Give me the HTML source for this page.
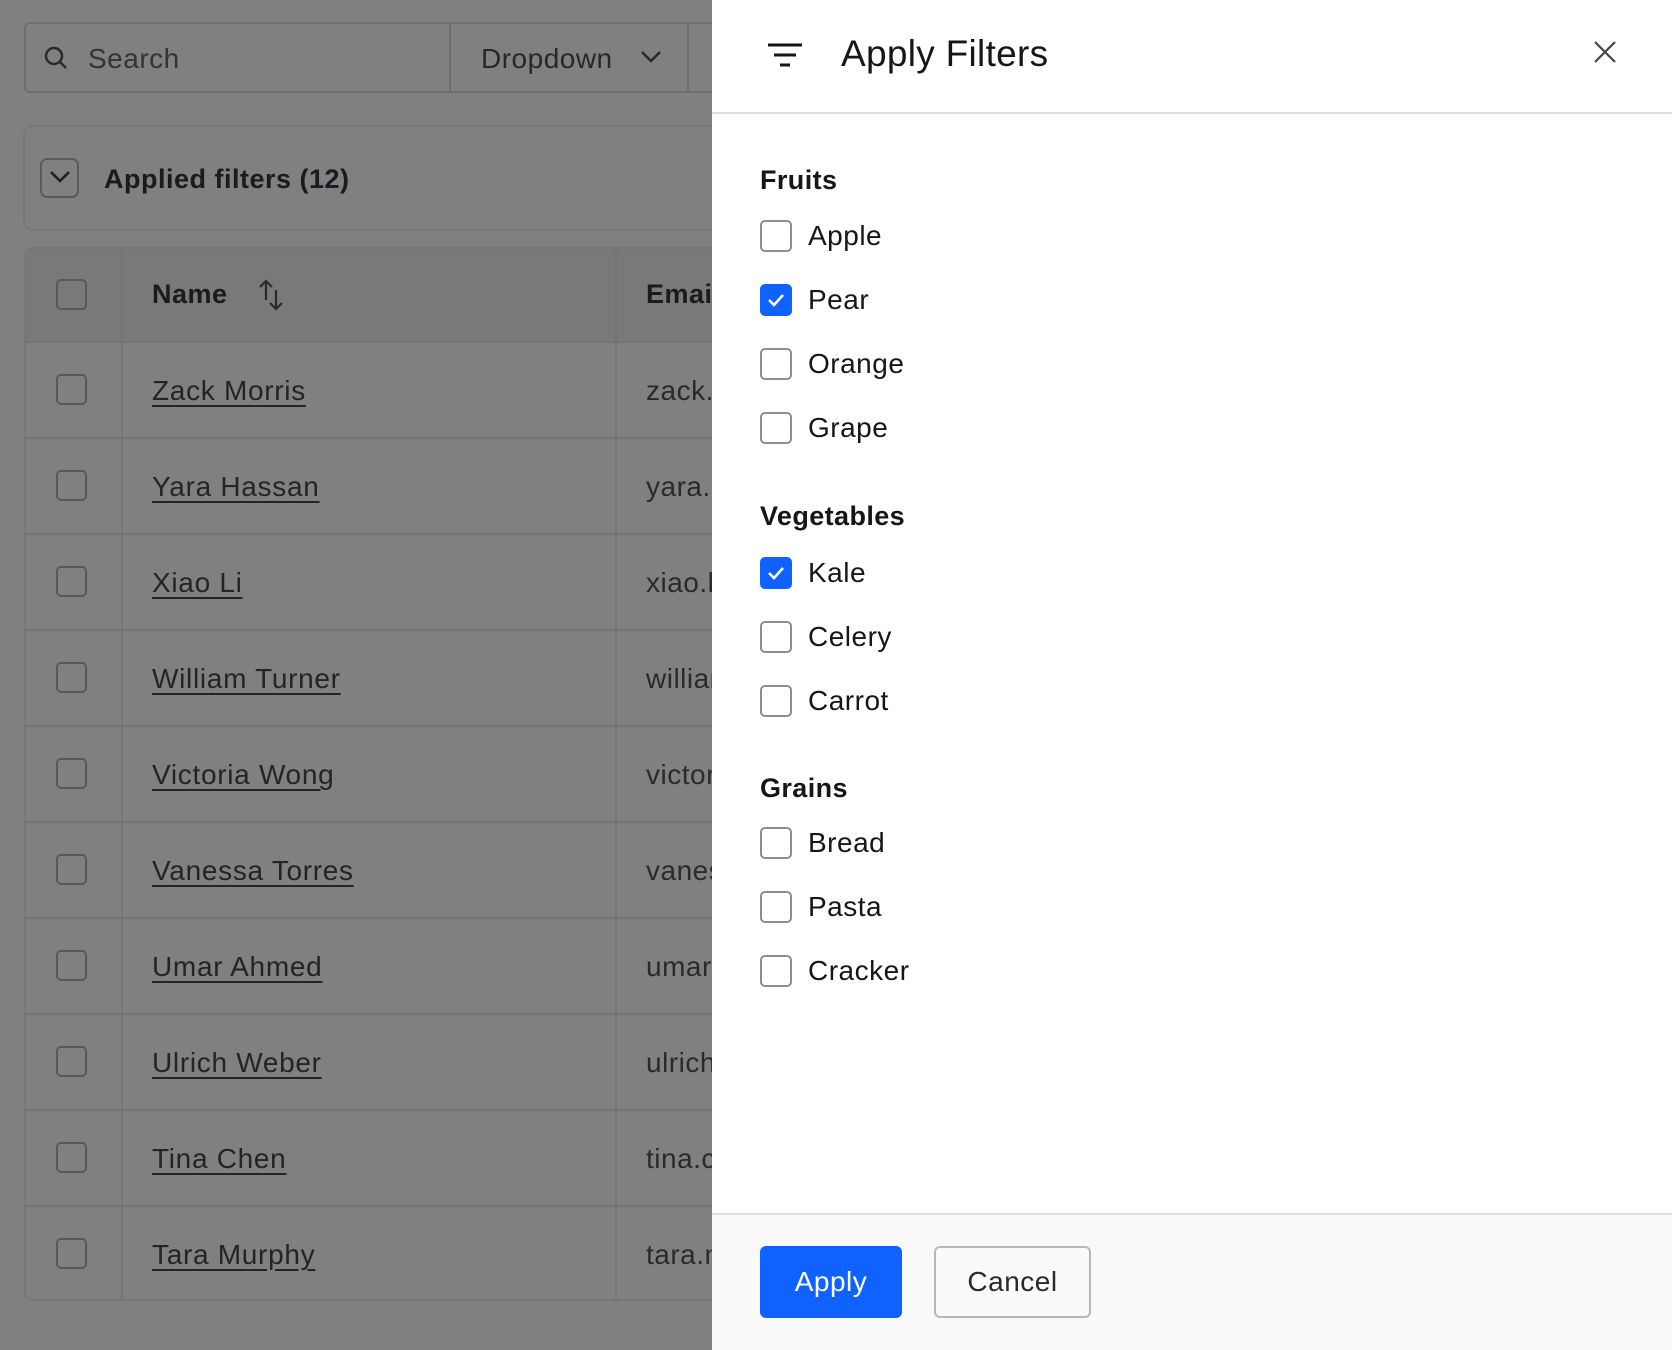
<!DOCTYPE html>
<html><head><meta charset="utf-8"><style>
*{box-sizing:border-box;margin:0;padding:0}
body{width:1672px;height:1350px;background:#808080;font-family:"Liberation Sans",Arial,sans-serif;position:relative;overflow:hidden;color:#1a1a1f}
.a{position:absolute}
.g{color:#27272c}
.cb{position:absolute;width:31px;height:31px;border:2px solid #58585c;border-radius:5px}
.row{position:absolute;left:24px;width:700px;height:96px;border-top:2px solid #747474}
.name{position:absolute;left:152px;font-size:28px;letter-spacing:0.7px;text-decoration:underline;text-underline-offset:5px;color:#232328}
.em{position:absolute;left:646px;font-size:28px;letter-spacing:0.5px;color:#2a2a2e}
.panel{position:absolute;left:712px;top:0;width:960px;height:1350px;background:#fff}
.h{position:absolute;left:48px;font-size:27px;letter-spacing:0.4px;font-weight:bold;color:#161616}
.it{position:absolute;left:48px;height:32px;display:flex;align-items:center}
.box{width:32px;height:32px;border:2px solid #8d8d94;border-radius:5px;background:#fff}
.box.on{background:#0f62fe;border-color:#0f62fe}
.lb{margin-left:16px;font-size:28px;letter-spacing:0.5px;color:#161616}
</style></head><body>
<div class="a" style="left:24px;top:22px;width:700px;height:71px;border:2px solid #6e6e6e;border-radius:6px"></div>
<div class="a" style="left:449px;top:23px;width:2px;height:69px;background:#6e6e6e"></div>
<div class="a" style="left:687px;top:23px;width:2px;height:69px;background:#6e6e6e"></div>
<svg class="a" style="left:42px;top:44px" width="28" height="28" viewBox="0 0 28 28"><circle cx="12" cy="12" r="8" fill="none" stroke="#2a2a2e" stroke-width="2.5"/><line x1="18" y1="18" x2="24" y2="24" stroke="#2a2a2e" stroke-width="2.5"/></svg>
<div class="a" style="left:88px;top:43px;font-size:28px;letter-spacing:0.5px;color:#333338">Search</div>
<div class="a g" style="left:481px;top:43px;font-size:28px;letter-spacing:0.5px">Dropdown</div>
<svg class="a" style="left:640px;top:50px" width="22" height="14" viewBox="0 0 22 14"><path d="M2 2 L11 11 L20 2" fill="none" stroke="#27272c" stroke-width="2.5"/></svg>
<div class="a" style="left:23px;top:125px;width:720px;height:106px;border:2px solid #777;border-radius:10px"></div>
<div class="a" style="left:40px;top:158px;width:39px;height:40px;border:2px solid #5a5a5e;border-radius:7px"></div>
<svg class="a" style="left:49px;top:170px" width="22" height="14" viewBox="0 0 22 14"><path d="M2 2 L11 11 L20 2" fill="none" stroke="#1f1f24" stroke-width="2.5"/></svg>
<div class="a" style="left:104px;top:164px;font-size:27px;letter-spacing:0.5px;font-weight:bold;color:#1a1a1f">Applied filters (12)</div>
<div class="a" style="left:24px;top:247px;width:700px;height:1054px;border:2px solid #777;border-radius:8px;overflow:hidden">
  <div class="a" style="left:0;top:0;width:700px;height:94px;background:#797979"></div>
  <div class="a" style="left:95px;top:0;width:2px;height:1054px;background:#747474"></div>
  <div class="a" style="left:589px;top:0;width:2px;height:1054px;background:#747474"></div>
</div>
<div class="cb" style="left:56px;top:279px"></div>
<div class="a" style="left:152px;top:279px;font-size:27px;letter-spacing:0.5px;font-weight:bold;color:#1a1a1f">Name</div>
<svg class="a" style="left:256px;top:278px" width="32" height="34" viewBox="0 0 32 34"><path d="M10 22 V3 M4 9 L10 3 L16 9 M20 12 V31 M14 25 L20 31 L26 25" fill="none" stroke="#2a2a2e" stroke-width="2.2"/></svg>
<div class="a" style="left:646px;top:279px;font-size:27px;letter-spacing:0.5px;font-weight:bold;color:#1a1a1f">Email</div>

<div class="row" style="top:341px"></div><div class="cb" style="left:56px;top:374px"></div><div class="name" style="top:375px">Zack Morris</div><div class="em" style="top:375px">zack.morris</div>
<div class="row" style="top:437px"></div><div class="cb" style="left:56px;top:470px"></div><div class="name" style="top:471px">Yara Hassan</div><div class="em" style="top:471px">yara.h</div>
<div class="row" style="top:533px"></div><div class="cb" style="left:56px;top:566px"></div><div class="name" style="top:567px">Xiao Li</div><div class="em" style="top:567px">xiao.li</div>
<div class="row" style="top:629px"></div><div class="cb" style="left:56px;top:662px"></div><div class="name" style="top:663px">William Turner</div><div class="em" style="top:663px">william</div>
<div class="row" style="top:725px"></div><div class="cb" style="left:56px;top:758px"></div><div class="name" style="top:759px">Victoria Wong</div><div class="em" style="top:759px">victoria</div>
<div class="row" style="top:821px"></div><div class="cb" style="left:56px;top:854px"></div><div class="name" style="top:855px">Vanessa Torres</div><div class="em" style="top:855px">vanessa</div>
<div class="row" style="top:917px"></div><div class="cb" style="left:56px;top:950px"></div><div class="name" style="top:951px">Umar Ahmed</div><div class="em" style="top:951px">umar.a</div>
<div class="row" style="top:1013px"></div><div class="cb" style="left:56px;top:1046px"></div><div class="name" style="top:1047px">Ulrich Weber</div><div class="em" style="top:1047px">ulrich.w</div>
<div class="row" style="top:1109px"></div><div class="cb" style="left:56px;top:1142px"></div><div class="name" style="top:1143px">Tina Chen</div><div class="em" style="top:1143px">tina.chen</div>
<div class="row" style="top:1205px"></div><div class="cb" style="left:56px;top:1238px"></div><div class="name" style="top:1239px">Tara Murphy</div><div class="em" style="top:1239px">tara.m</div>

<div class="panel">
  <svg class="a" style="left:54px;top:42px" width="38" height="28" viewBox="0 0 38 28"><path d="M2 3 H36 M8 13 H30 M14 23 H24" stroke="#161616" stroke-width="3"/></svg>
  <div class="a" style="left:129px;top:33px;font-size:37px;letter-spacing:0.3px;font-weight:500;color:#161616">Apply Filters</div>
  <svg class="a" style="left:881px;top:40px" width="24" height="24" viewBox="0 0 24 24"><path d="M2 2 L22 22 M22 2 L2 22" stroke="#444" stroke-width="2.2"/></svg>
  <div class="a" style="left:0;top:112px;width:960px;height:2px;background:#dedee3"></div>

  <div class="h" style="top:165px">Fruits</div>
  <div class="it" style="top:220px"><div class="box"></div><div class="lb">Apple</div></div>
  <div class="it" style="top:284px"><div class="box on"><svg width="28" height="28" viewBox="0 0 28 28"><path d="M7 14 L12 19 L21 9" fill="none" stroke="#fff" stroke-width="2.5"/></svg></div><div class="lb">Pear</div></div>
  <div class="it" style="top:348px"><div class="box"></div><div class="lb">Orange</div></div>
  <div class="it" style="top:412px"><div class="box"></div><div class="lb">Grape</div></div>

  <div class="h" style="top:501px">Vegetables</div>
  <div class="it" style="top:557px"><div class="box on"><svg width="28" height="28" viewBox="0 0 28 28"><path d="M7 14 L12 19 L21 9" fill="none" stroke="#fff" stroke-width="2.5"/></svg></div><div class="lb">Kale</div></div>
  <div class="it" style="top:621px"><div class="box"></div><div class="lb">Celery</div></div>
  <div class="it" style="top:685px"><div class="box"></div><div class="lb">Carrot</div></div>

  <div class="h" style="top:773px">Grains</div>
  <div class="it" style="top:827px"><div class="box"></div><div class="lb">Bread</div></div>
  <div class="it" style="top:891px"><div class="box"></div><div class="lb">Pasta</div></div>
  <div class="it" style="top:955px"><div class="box"></div><div class="lb">Cracker</div></div>

  <div class="a" style="left:0;top:1213px;width:960px;height:137px;background:#f9f9f9;border-top:2px solid #dedee3"></div>
  <div class="a" style="left:48px;top:1246px;width:142px;height:72px;background:#0f62fe;border-radius:6px;color:#fff;font-size:28px;letter-spacing:0.5px;display:flex;align-items:center;justify-content:center">Apply</div>
  <div class="a" style="left:222px;top:1246px;width:157px;height:72px;background:#fafafa;border:2px solid #b8b8bc;border-radius:6px;color:#2a2a2e;font-size:28px;letter-spacing:0.5px;display:flex;align-items:center;justify-content:center">Cancel</div>
</div>
</body></html>
